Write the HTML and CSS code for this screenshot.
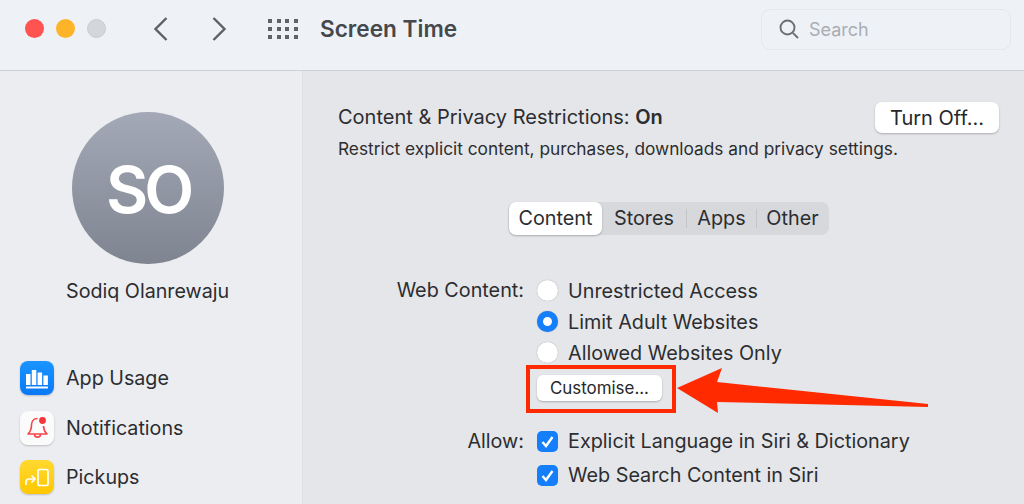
FILE: index.html
```html
<!DOCTYPE html>
<html lang="en">
  <head>
    <meta charset="UTF-8" />
    <title>Screen Time</title>
    <link rel="stylesheet" href="styles.css">
  </head>

  <body>
    <header class="toolbar">
      <div class="lights">
        <span class="light red"></span>
        <span class="light yellow"></span>
        <span class="light grey"></span>
      </div>
      <div class="nav-arrows">
        <svg width="16" height="26" viewBox="0 0 16 26"><path d="M13.5 2 L2.5 13 L13.5 24" /></svg>
        <svg width="16" height="26" viewBox="0 0 16 26"><path d="M2.5 2 L13.5 13 L2.5 24" /></svg>
      </div>
      <div class="grid-icon">
        <i></i><i></i><i></i><i></i><i></i><i></i><i></i><i></i><i></i><i></i><i></i><i></i>
      </div>
      <div class="title">Screen Time</div>
      <div class="search">
        <svg width="22" height="22" viewBox="0 0 22 22"><circle cx="9.5" cy="9.5" r="7" /><path d="M14.8 14.8 L20 20" /></svg>
        <span>Search</span>
      </div>
    </header>

    <div class="body-row">
      <aside class="sidebar">
        <div class="avatar">SO</div>
        <div class="user-name">Sodiq Olanrewaju</div>
        <ul class="side-list">
          <li>
            <span class="app-icon blue">
              <svg width="34" height="34" viewBox="0 0 34 34"><path fill="#fff" d="M6 13h4.500v11H6zM11.800 9h4.500v15h-4.500zM17.600 11.500h4.500V24h-4.500zM23.400 14.500h4.500V24h-4.500zM6 25.500h21.900v2H6z" /></svg>
            </span>
            App Usage
          </li>
          <li>
            <span class="app-icon white">
              <svg width="34" height="34" viewBox="0 0 34 34"><path fill="none" stroke="#f5454a" stroke-width="1.600" stroke-linejoin="round" d="M17.500 7.500c-4 0-6 3-6 6.500 0 4-1 6.500-3.500 9h19c-2.500-2.500-3.500-5-3.500-8M14.500 23.500c0 3.500 6 3.500 6 0" /><circle cx="22.500" cy="9.500" r="3.400" fill="#f5353a" /></svg>
            </span>
            Notifications
          </li>
          <li>
            <span class="app-icon gold">
              <svg width="34" height="34" viewBox="0 0 34 34"><rect x="18" y="9.500" width="10" height="16" rx="1.800" fill="none" stroke="#fff" stroke-width="1.700" /><path fill="none" stroke="#fff" stroke-width="1.700" d="M6 25v-3c0-2 1-3 3-3h5.500M11.500 15.500l3.500 3.500-3.500 3.500" /></svg>
            </span>
            Pickups
          </li>
        </ul>
      </aside>

      <main class="content">
        <div class="status-row">
          <div class="status-text">Content &amp; Privacy Restrictions: <b>On</b></div>
          <button class="btn turn-off">Turn Off...</button>
        </div>
        <p class="desc">Restrict explicit content, purchases, downloads and privacy settings.</p>

        <div class="tabs">
          <span class="tab active">Content</span>
          <span class="tab">Stores</span>
          <span class="tab sep">Apps</span>
          <span class="tab sep">Other</span>
        </div>

        <div class="form">
          <div class="form-label">Web Content:</div>
          <div class="options">
            <div class="option"><span class="radio"></span>Unrestricted Access</div>
            <div class="option"><span class="radio on"></span>Limit Adult Websites</div>
            <div class="option"><span class="radio"></span>Allowed Websites Only</div>
            <button class="btn customise">Customise...</button>
          </div>
          <div class="form-label allow">Allow:</div>
          <div class="options checks">
            <div class="option">
              <span class="check"><svg width="21" height="21" viewBox="0 0 21 21"><path d="M5.500 11 L9 15 L15.500 6" /></svg></span>
              Explicit Language in Siri &amp; Dictionary
            </div>
            <div class="option">
              <span class="check"><svg width="21" height="21" viewBox="0 0 21 21"><path d="M5.500 11 L9 15 L15.500 6" /></svg></span>
              Web Search Content in Siri
            </div>
          </div>
        </div>
      </main>
    </div>

    <!-- annotation drawn over the screenshot -->
    <div class="callout-box"></div>
    <svg class="callout-arrow" width="256" height="52" viewBox="0 0 256 52">
      <path fill="#ff2a00" d="M1 23 L46 3 L41 17 L252 39 L252 42 L41 37 L42 48 Z" />
    </svg>
  </body>
</html>
```

FILE: styles.css
```css
* {
  box-sizing: border-box;
}

body {
  margin: 0;
  width: 1024px;
  height: 504px;
  position: relative;
  overflow: hidden;
  font-family: Inter, 'Noto Sans', sans-serif;
  color: #2c2d30;
  background-color: #e4e6e9;
  display: flex;
  flex-direction: column;
}

.toolbar {
  height: 71px;
  flex-shrink: 0;
  display: flex;
  align-items: center;
  padding: 0 13px 13px 25px;
  background-color: #eef2f7;
  border-bottom: 1px solid #cdd2d8;
}

.lights {
  display: flex;
  gap: 12px;
  width: 128px;
}

.light {
  width: 19px;
  height: 19px;
  border-radius: 50%;
}

.red { background-color: #fe5350; }
.yellow { background-color: #fdb428; }
.grey { background-color: #d3d7db; border: 1px solid #c9cdd2; }

.nav-arrows {
  display: flex;
  gap: 42px;
  width: 115px;
}

.nav-arrows svg path {
  fill: none;
  stroke: #5d6166;
  stroke-width: 2.4;
}

.grid-icon {
  display: grid;
  grid-template-columns: repeat(4, 4px);
  gap: 4px 4.5px;
  width: 52px;
}

.grid-icon i {
  width: 4px;
  height: 4px;
  background-color: #5f6367;
}

.title {
  flex: 1;
  font-size: 22.6px;
  font-weight: 600;
  color: #45484d;
}

.search {
  width: 250px;
  height: 41px;
  margin-top: 1px;
  display: flex;
  align-items: center;
  gap: 9px;
  padding-left: 16px;
  border: 1px solid #e4e8ed;
  border-radius: 9px;
  font-size: 18px;
  color: #a9adb2;
}

.search svg {
  fill: none;
  stroke: #6b6f73;
  stroke-width: 1.9;
}

.body-row {
  flex: 1;
  display: flex;
}

.sidebar {
  width: 303px;
  flex-shrink: 0;
  padding: 41px 0 0 20px;
  background-color: #ebedf0;
  border-right: 1px solid #dddfe2;
}

.avatar {
  width: 152px;
  height: 152px;
  margin-left: 52px;
  border-radius: 50%;
  display: flex;
  align-items: center;
  justify-content: center;
  background: linear-gradient(#a3a9b6, #7e8490);
  color: #fff;
  font-size: 65px;
  font-weight: 600;
  letter-spacing: -4px;
  padding-top: 3px;
}

.user-name {
  margin: 15px 0 0 46px;
  font-size: 19.7px;
  line-height: 24px;
}

.side-list {
  list-style: none;
  margin: 58px 0 0;
  padding: 0;
  font-size: 19.7px;
}

.side-list li {
  display: flex;
  align-items: center;
  gap: 12px;
  height: 34px;
  margin-bottom: 15.5px;
}

.app-icon {
  width: 34px;
  height: 34px;
  border-radius: 8px;
  box-shadow: 0 1px 2px rgba(0, 0, 0, 0.2);
}

.app-icon svg {
  display: block;
}

.blue { background: linear-gradient(#1a95ff, #0a78f5); }
.white { background-color: #fbfbfc; }
.gold { background: linear-gradient(#ffd930, #ffc800); }

.content {
  flex: 1;
  padding: 31px 25px 0 35px;
}

.status-row {
  display: flex;
  align-items: center;
  justify-content: space-between;
  height: 31px;
}

.status-text {
  font-size: 20px;
  padding-bottom: 2px;
}

.status-text b {
  font-weight: 600;
}

.btn {
  border: none;
  background-color: #fff;
  color: #26272a;
  font-family: inherit;
  box-shadow: 0 1px 2px rgba(0, 0, 0, 0.25);
  padding: 0;
}

.turn-off {
  width: 124px;
  height: 31px;
  border-radius: 7px;
  font-size: 20px;
}

.desc {
  margin: 6px 0 0;
  font-size: 17.3px;
  line-height: 20px;
}

.tabs {
  width: 321px;
  height: 33px;
  margin: 43px 0 0 170px;
  display: flex;
  align-items: center;
  border-radius: 8px;
  background-color: #d6d8dc;
  font-size: 19.8px;
}

.tab {
  height: 33px;
  line-height: 32px;
  text-align: center;
}

.tab:nth-child(1) { width: 93px; }
.tab:nth-child(2) { width: 84px; }
.tab:nth-child(3) { width: 70px; }
.tab:nth-child(4) { width: 72px; }

.tab.active {
  margin-left: 1px;
  background-color: #fff;
  border-radius: 7px;
  box-shadow: 0 1px 2px rgba(0, 0, 0, 0.25);
}

.tab.sep {
  border-left: 1px solid #c3c5c9;
  height: 19px;
  line-height: 19px;
}

.form {
  margin-top: 40px;
  display: grid;
  grid-template-columns: 186px 1fr;
  column-gap: 13px;
  font-size: 19.8px;
}

.form-label {
  text-align: right;
  line-height: 31px;
}

.form-label.allow {
  margin-top: 25px;
}

.options {
  display: flex;
  flex-direction: column;
}

.options.checks {
  margin-top: 23px;
}

.option {
  display: flex;
  align-items: center;
  gap: 10px;
  height: 31px;
}

.checks .option {
  height: 34px;
}

.radio {
  width: 21px;
  height: 21px;
  border-radius: 50%;
  background-color: #fff;
  box-shadow: 0 0 1px rgba(0, 0, 0, 0.4);
}

.radio.on {
  border: 6px solid #147efb;
}

.customise {
  width: 125px;
  height: 26px;
  margin-top: 7px;
  border-radius: 6px;
  font-size: 16.9px;
}

.check {
  width: 21px;
  height: 21px;
  border-radius: 5px;
  background-color: #147efb;
}

.check svg {
  display: block;
  fill: none;
  stroke: #fff;
  stroke-width: 2.4;
}

.callout-box {
  position: absolute;
  left: 526px;
  top: 365px;
  width: 150px;
  height: 48px;
  border: 4px solid #ff2a00;
}

.callout-arrow {
  position: absolute;
  left: 676px;
  top: 365px;
}
```
